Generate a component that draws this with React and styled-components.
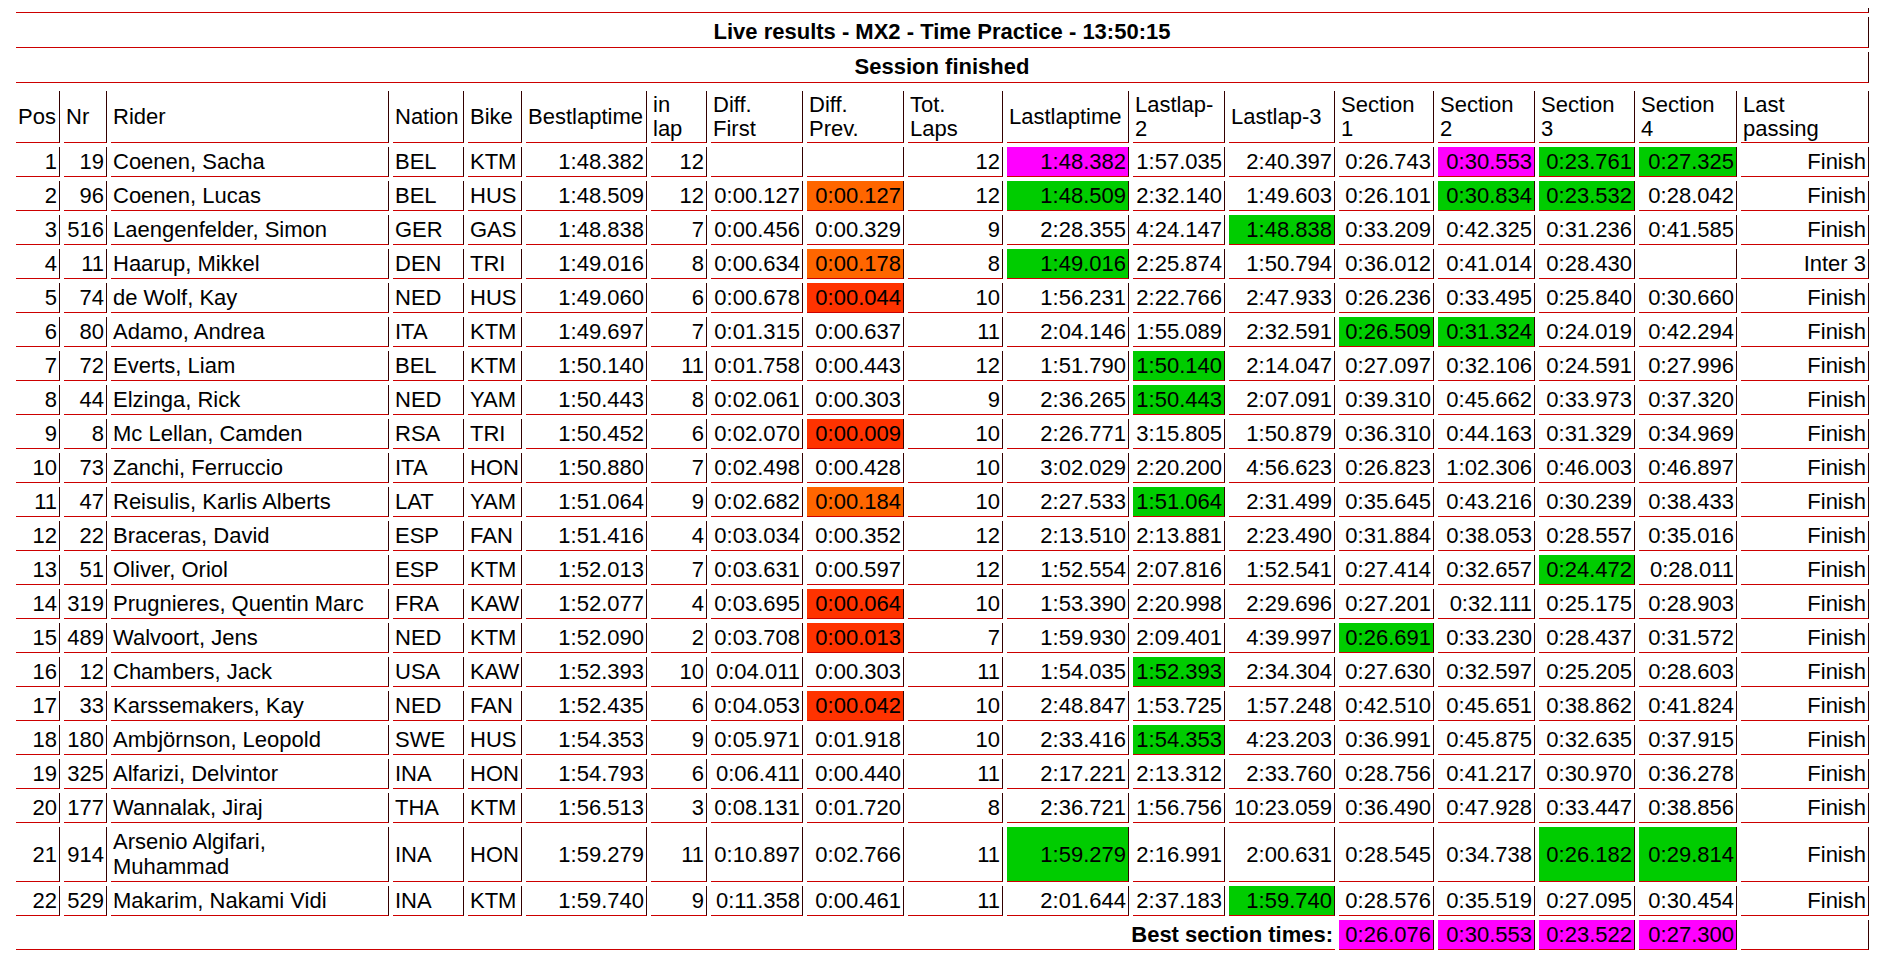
import React from "react";
import styled, { createGlobalStyle } from "styled-components";

const GlobalStyle = createGlobalStyle`
  html, body {
    margin: 0;
    padding: 0;
    background: #fff;
  }
  body {
    font-family: "Liberation Sans", Arial, sans-serif;
    color: #000;
  }
`;

const Page = styled.div`
  padding: 4px 0 0 12px;
`;

const Table = styled.table`
  table-layout: fixed;
  width: 1861px;
  border-collapse: separate;
  border-spacing: 4px;
  font-size: 22px;
  line-height: 25px;
`;

const Cell = styled.td`
  padding: 2px 2px;
  border-right: 1px solid #330000;
  border-bottom: 1px solid #cc0000;
  vertical-align: middle;
  text-align: ${(p) => (p.$left ? "left" : "right")};
  background: ${(p) => p.$bg || "transparent"};
  overflow: hidden;
`;

const HeadCell = styled.td`
  padding: 2px 2px 1px;
  border-right: 1px solid #330000;
  border-bottom: 1px solid #cc0000;
  vertical-align: middle;
  text-align: left;
  line-height: 24px;
`;

const TitleCell = styled.td`
  padding: 2px 2px 3px;
  border-right: 1px solid #330000;
  border-bottom: 1px solid #cc0000;
  text-align: center;
  font-weight: bold;
`;

const SpacerCell = styled.td`
  padding: 0;
  height: 4px;
  border-right: 1px solid #330000;
  border-bottom: 1px solid #cc0000;
`;

const BestLabel = styled.td`
  padding: 2px 2px;
  border-bottom: 1px solid #cc0000;
  text-align: right;
  font-weight: bold;
`;

const colors = {
  m: "#ff00ff",
  g: "#00cc00",
  o: "#ff6600",
  r: "#ff3300",
};

const widths = [44, 43, 278, 71, 54, 121, 56, 92, 97, 95, 122, 92, 106, 95, 97, 96, 98, 128];

const headers = [
  ["Pos"],
  ["Nr"],
  ["Rider"],
  ["Nation"],
  ["Bike"],
  ["Bestlaptime"],
  ["in", "lap"],
  ["Diff.", "First"],
  ["Diff.", "Prev."],
  ["Tot.", "Laps"],
  ["Lastlaptime"],
  ["Lastlap-", "2"],
  ["Lastlap-3"],
  ["Section", "1"],
  ["Section", "2"],
  ["Section", "3"],
  ["Section", "4"],
  ["Last", "passing"],
];

// value|colour key ("1:48.382|m")
const rows = [
  ["1", "19", "Coenen, Sacha", "BEL", "KTM", "1:48.382", "12", "", "", "12", "1:48.382|m", "1:57.035", "2:40.397", "0:26.743", "0:30.553|m", "0:23.761|g", "0:27.325|g", "Finish"],
  ["2", "96", "Coenen, Lucas", "BEL", "HUS", "1:48.509", "12", "0:00.127", "0:00.127|o", "12", "1:48.509|g", "2:32.140", "1:49.603", "0:26.101", "0:30.834|g", "0:23.532|g", "0:28.042", "Finish"],
  ["3", "516", "Laengenfelder, Simon", "GER", "GAS", "1:48.838", "7", "0:00.456", "0:00.329", "9", "2:28.355", "4:24.147", "1:48.838|g", "0:33.209", "0:42.325", "0:31.236", "0:41.585", "Finish"],
  ["4", "11", "Haarup, Mikkel", "DEN", "TRI", "1:49.016", "8", "0:00.634", "0:00.178|o", "8", "1:49.016|g", "2:25.874", "1:50.794", "0:36.012", "0:41.014", "0:28.430", "", "Inter 3"],
  ["5", "74", "de Wolf, Kay", "NED", "HUS", "1:49.060", "6", "0:00.678", "0:00.044|r", "10", "1:56.231", "2:22.766", "2:47.933", "0:26.236", "0:33.495", "0:25.840", "0:30.660", "Finish"],
  ["6", "80", "Adamo, Andrea", "ITA", "KTM", "1:49.697", "7", "0:01.315", "0:00.637", "11", "2:04.146", "1:55.089", "2:32.591", "0:26.509|g", "0:31.324|g", "0:24.019", "0:42.294", "Finish"],
  ["7", "72", "Everts, Liam", "BEL", "KTM", "1:50.140", "11", "0:01.758", "0:00.443", "12", "1:51.790", "1:50.140|g", "2:14.047", "0:27.097", "0:32.106", "0:24.591", "0:27.996", "Finish"],
  ["8", "44", "Elzinga, Rick", "NED", "YAM", "1:50.443", "8", "0:02.061", "0:00.303", "9", "2:36.265", "1:50.443|g", "2:07.091", "0:39.310", "0:45.662", "0:33.973", "0:37.320", "Finish"],
  ["9", "8", "Mc Lellan, Camden", "RSA", "TRI", "1:50.452", "6", "0:02.070", "0:00.009|r", "10", "2:26.771", "3:15.805", "1:50.879", "0:36.310", "0:44.163", "0:31.329", "0:34.969", "Finish"],
  ["10", "73", "Zanchi, Ferruccio", "ITA", "HON", "1:50.880", "7", "0:02.498", "0:00.428", "10", "3:02.029", "2:20.200", "4:56.623", "0:26.823", "1:02.306", "0:46.003", "0:46.897", "Finish"],
  ["11", "47", "Reisulis, Karlis Alberts", "LAT", "YAM", "1:51.064", "9", "0:02.682", "0:00.184|o", "10", "2:27.533", "1:51.064|g", "2:31.499", "0:35.645", "0:43.216", "0:30.239", "0:38.433", "Finish"],
  ["12", "22", "Braceras, David", "ESP", "FAN", "1:51.416", "4", "0:03.034", "0:00.352", "12", "2:13.510", "2:13.881", "2:23.490", "0:31.884", "0:38.053", "0:28.557", "0:35.016", "Finish"],
  ["13", "51", "Oliver, Oriol", "ESP", "KTM", "1:52.013", "7", "0:03.631", "0:00.597", "12", "1:52.554", "2:07.816", "1:52.541", "0:27.414", "0:32.657", "0:24.472|g", "0:28.011", "Finish"],
  ["14", "319", "Prugnieres, Quentin Marc", "FRA", "KAW", "1:52.077", "4", "0:03.695", "0:00.064|r", "10", "1:53.390", "2:20.998", "2:29.696", "0:27.201", "0:32.111", "0:25.175", "0:28.903", "Finish"],
  ["15", "489", "Walvoort, Jens", "NED", "KTM", "1:52.090", "2", "0:03.708", "0:00.013|r", "7", "1:59.930", "2:09.401", "4:39.997", "0:26.691|g", "0:33.230", "0:28.437", "0:31.572", "Finish"],
  ["16", "12", "Chambers, Jack", "USA", "KAW", "1:52.393", "10", "0:04.011", "0:00.303", "11", "1:54.035", "1:52.393|g", "2:34.304", "0:27.630", "0:32.597", "0:25.205", "0:28.603", "Finish"],
  ["17", "33", "Karssemakers, Kay", "NED", "FAN", "1:52.435", "6", "0:04.053", "0:00.042|r", "10", "2:48.847", "1:53.725", "1:57.248", "0:42.510", "0:45.651", "0:38.862", "0:41.824", "Finish"],
  ["18", "180", "Ambjörnson, Leopold", "SWE", "HUS", "1:54.353", "9", "0:05.971", "0:01.918", "10", "2:33.416", "1:54.353|g", "4:23.203", "0:36.991", "0:45.875", "0:32.635", "0:37.915", "Finish"],
  ["19", "325", "Alfarizi, Delvintor", "INA", "HON", "1:54.793", "6", "0:06.411", "0:00.440", "11", "2:17.221", "2:13.312", "2:33.760", "0:28.756", "0:41.217", "0:30.970", "0:36.278", "Finish"],
  ["20", "177", "Wannalak, Jiraj", "THA", "KTM", "1:56.513", "3", "0:08.131", "0:01.720", "8", "2:36.721", "1:56.756", "10:23.059", "0:36.490", "0:47.928", "0:33.447", "0:38.856", "Finish"],
  ["21", "914", "Arsenio Algifari, Muhammad", "INA", "HON", "1:59.279", "11", "0:10.897", "0:02.766", "11", "1:59.279|g", "2:16.991", "2:00.631", "0:28.545", "0:34.738", "0:26.182|g", "0:29.814|g", "Finish"],
  ["22", "529", "Makarim, Nakami Vidi", "INA", "KTM", "1:59.740", "9", "0:11.358", "0:00.461", "11", "2:01.644", "2:37.183", "1:59.740|g", "0:28.576", "0:35.519", "0:27.095", "0:30.454", "Finish"],
];

const bestSections = ["0:26.076", "0:30.553", "0:23.522", "0:27.300"];

const leftCols = [2, 3, 4];

const ResultRow = ({ data }) => (
  <tr>
    {data.map((raw, i) => {
      const [value, key] = raw.split("|");
      return (
        <Cell key={i} $left={leftCols.includes(i)} $bg={key ? colors[key] : undefined}>
          {value}
        </Cell>
      );
    })}
  </tr>
);

export default function App() {
  return (
    <>
      <GlobalStyle />
      <Page>
        <Table>
          <tbody>
            <tr>
              <SpacerCell />
            </tr>
            <tr>
              <TitleCell>Live results - MX2 - Time Practice - 13:50:15</TitleCell>
            </tr>
            <tr>
              <TitleCell>Session finished</TitleCell>
            </tr>
          </tbody>
        </Table>
        <Table>
          <colgroup>
            {widths.map((w, i) => (
              <col key={i} style={{ width: w }} />
            ))}
          </colgroup>
          <tbody>
            <tr>
              {headers.map((h, i) => (
                <HeadCell key={i}>
                  {h[0]}
                  {h[1] && (
                    <>
                      <br />
                      {h[1]}
                    </>
                  )}
                </HeadCell>
              ))}
            </tr>
            {rows.map((r) => (
              <ResultRow key={r[0]} data={r} />
            ))}
            <tr>
              <BestLabel colSpan={13}>Best section times:</BestLabel>
              {bestSections.map((s) => (
                <Cell key={s} $bg={colors.m}>
                  {s}
                </Cell>
              ))}
              <Cell />
            </tr>
          </tbody>
        </Table>
      </Page>
    </>
  );
}
